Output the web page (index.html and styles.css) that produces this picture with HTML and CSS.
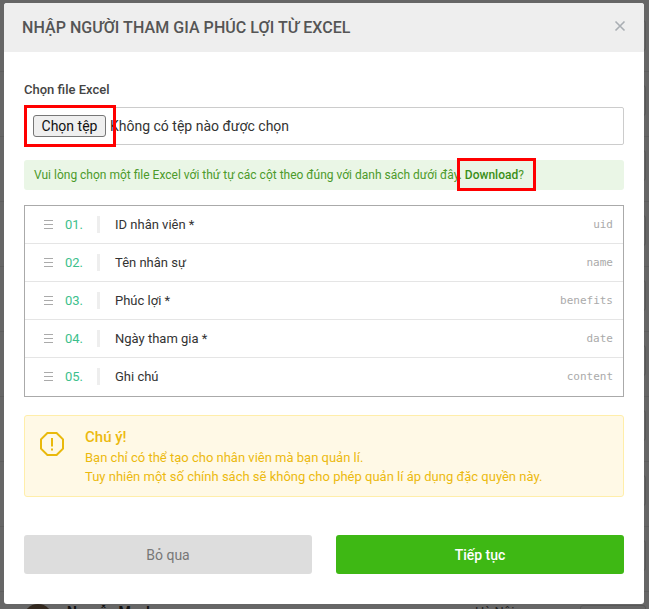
FILE: index.html

```html
<!DOCTYPE html>
<html lang="vi">

<head>
    <meta charset="UTF-8">
    <meta name="viewport" content="width=device-width, initial-scale=1.0">
    <title>Nhập người tham gia phúc lợi từ Excel</title>
    <link rel="stylesheet" href="styles.css">
</head>

<body>
    <!-- page behind the dialog -->
    <div class="page">
        <div class="page-row first"><span class="page-box"></span></div>
        <div class="page-row"><span class="page-box"></span></div>
        <div class="page-row"><span class="page-box"></span></div>
        <div class="page-row"><span class="page-box"></span></div>
        <div class="page-row"><span class="page-box"></span></div>
        <div class="page-row"><span class="page-box"></span></div>
        <div class="page-row"><span class="page-box"></span></div>
        <div class="page-row"><span class="page-box"></span></div>
        <div class="page-row"><span class="page-box"></span></div>
        <div class="page-row last">
            <span class="page-avatar"></span>
            <span class="page-name">Nguyễn Mạnh</span>
            <span class="page-text">Hà Nội</span>
            <span class="page-box"></span>
        </div>
    </div>

    <div class="modal">
        <div class="modal-header">
            <h2>Nhập người tham gia phúc lợi từ Excel</h2>
            <svg class="modal-close" width="12" height="12" viewBox="0 0 12 12">
                <path d="M1.5 1.5l9 9M10.5 1.5l-9 9" stroke="#a9aeb3" stroke-width="1.6" fill="none" />
            </svg>
        </div>

        <div class="modal-body">
            <label class="field-label">Chọn file Excel</label>
            <div class="file-input">
                <button class="file-button">Chọn tệp</button>
                <span>Không có tệp nào được chọn</span>
            </div>

            <div class="alert-success">
                Vui lòng chọn một file Excel với thứ tự các cột theo đúng với danh sách dưới đây. <strong>Download</strong>?
            </div>

            <ul class="column-list">
                <li class="column-row">
                    <span class="drag"></span>
                    <span class="num">01.</span>
                    <span class="name">ID nhân viên *</span>
                    <code class="key">uid</code>
                </li>
                <li class="column-row">
                    <span class="drag"></span>
                    <span class="num">02.</span>
                    <span class="name">Tên nhân sự</span>
                    <code class="key">name</code>
                </li>
                <li class="column-row">
                    <span class="drag"></span>
                    <span class="num">03.</span>
                    <span class="name">Phúc lợi *</span>
                    <code class="key">benefits</code>
                </li>
                <li class="column-row">
                    <span class="drag"></span>
                    <span class="num">04.</span>
                    <span class="name">Ngày tham gia *</span>
                    <code class="key">date</code>
                </li>
                <li class="column-row">
                    <span class="drag"></span>
                    <span class="num">05.</span>
                    <span class="name">Ghi chú</span>
                    <code class="key">content</code>
                </li>
            </ul>

            <div class="alert-warning">
                <svg class="warning-icon" width="24" height="24" viewBox="0 0 24 24">
                    <path d="M7.4 1h9.2L23 7.4v9.2L16.6 23H7.4L1 16.6V7.4z" fill="none" stroke="#e9b90c" stroke-width="2" />
                    <path d="M12 6v8.5M12 16.5v2" fill="none" stroke="#e9b90c" stroke-width="2" />
                </svg>
                <div>
                    <div class="warning-title">Chú ý!</div>
                    <div>Bạn chỉ có thể tạo cho nhân viên mà bạn quản lí.</div>
                    <div>Tuy nhiên một số chính sách sẽ không cho phép quản lí áp dụng đặc quyền này.</div>
                </div>
            </div>

            <div class="modal-actions">
                <button class="btn btn-skip">Bỏ qua</button>
                <button class="btn btn-next">Tiếp tục</button>
            </div>
        </div>

        <!-- red annotation boxes -->
        <span class="mark mark-file"></span>
        <span class="mark mark-download"></span>
    </div>
</body>

</html>
```

FILE: styles.css

```css
html,
body {
    height: 100%;
}

body {
    margin: 0;
    font-family: Roboto, "Liberation Sans", sans-serif;
    background-color: #666;
    color: #333;
    overflow: hidden;
    position: relative;
}

.page {
    height: 609px;
    overflow: hidden;
}

.page-row {
    box-sizing: border-box;
    height: 65px;
    padding: 13px 3px 0 0;
    border-bottom: 1px solid #5e5e5e;
    display: flex;
    align-items: flex-start;
    justify-content: flex-end;
}

.page-row.first {
    height: 72px;
    padding-top: 20px;
}

.page-box {
    box-sizing: border-box;
    width: 66px;
    height: 31px;
    border: 1px solid #585858;
    border-radius: 3px;
}

.page-row.last {
    border-bottom: 0;
    position: relative;
}

.page-avatar {
    position: absolute;
    left: 23px;
    top: 12px;
    width: 30px;
    height: 30px;
    border-radius: 50%;
    background: #33291f;
}

.page-name {
    position: absolute;
    left: 67px;
    top: 12px;
    font-size: 14px;
    font-weight: 700;
    color: #111;
}

.page-text {
    position: absolute;
    left: 475px;
    top: 12px;
    font-size: 13px;
    color: #222;
}

.modal {
    position: absolute;
    left: 4px;
    top: 3px;
    width: 640px;
    height: 601px;
    background: #fff;
    border-radius: 3px;
}

.modal-header {
    height: 49px;
    background: #eee;
    border-radius: 3px 3px 0 0;
    display: flex;
    align-items: center;
    justify-content: space-between;
    padding: 0 18px;
}

.modal-header h2 {
    margin: 0;
    font-size: 16px;
    font-weight: 500;
    letter-spacing: 0.06px;
    color: #555;
    text-transform: uppercase;
}

.modal-close {
    margin-top: -3px;
}

.modal-body {
    padding: 30px 20px 0;
}

.field-label {
    display: block;
    font-size: 13px;
    font-weight: 500;
    line-height: 16px;
    margin-bottom: 9px;
    color: #444;
}

.file-input {
    height: 36px;
    border: 1px solid #ccc;
    border-radius: 2px;
    display: flex;
    align-items: center;
    padding-left: 8px;
    font-size: 14px;
    color: #333;
}

.file-button {
    width: 73px;
    height: 22px;
    padding: 0;
    margin-right: 4px;
    font-family: inherit;
    font-size: 14px;
    color: #111;
    background: #efefef;
    border: 1px solid #767676;
    border-radius: 3px;
}

.alert-success {
    height: 30px;
    line-height: 30px;
    margin-top: 15px;
    padding-left: 10px;
    background: #eaf6e6;
    border-radius: 3px;
    font-size: 12px;
    color: #4c9a2a;
    white-space: nowrap;
}

.alert-success strong {
    font-weight: 500;
    color: #3a8f18;
}

.column-list {
    list-style: none;
    margin: 15px 0 0;
    padding: 0;
    border: 1px solid #aaa;
}

.column-row {
    height: 37px;
    border-bottom: 1px solid #e5e5e5;
    display: flex;
    align-items: center;
    font-size: 13px;
}

.column-row:last-child {
    height: 37px;
    padding-bottom: 1px;
    border-bottom: 0;
}

.drag {
    width: 9px;
    height: 7px;
    margin-left: 19px;
    border-top: 1px solid #aaa;
    border-bottom: 1px solid #aaa;
    position: relative;
}

.drag::after {
    content: "";
    position: absolute;
    left: 0;
    right: 0;
    top: 3px;
    height: 1px;
    background: #aaa;
}

.num {
    width: 32px;
    margin-left: 12px;
    color: #3cbf8c;
    border-right: 3px solid #eee;
    line-height: 17px;
}

.name {
    margin-left: 15px;
    flex: 1;
}

.key {
    margin-right: 10px;
    font-family: "DejaVu Sans Mono", monospace;
    font-size: 11px;
    color: #aaa;
}

.alert-warning {
    height: 80px;
    margin-top: 18px;
    background: #fff9e6;
    border: 1px solid #ffeeaa;
    border-radius: 3px;
    display: flex;
    font-size: 13px;
    line-height: 19px;
    color: #ecb90f;
}

.warning-icon {
    margin: 16px 21px 0 15px;
    flex: none;
}

.warning-title {
    margin-top: 11px;
    font-size: 15px;
    font-weight: 500;
    line-height: 21px;
}

.modal-actions {
    display: flex;
    gap: 24px;
    margin-top: 38px;
}

.btn {
    flex: 1;
    height: 39px;
    border: 0;
    border-radius: 3px;
    font-family: inherit;
    font-size: 14px;
}

.btn-skip {
    background: #ddd;
    color: #777;
}

.btn-next {
    background: #3eb814;
    color: #fff;
    font-weight: 500;
}

.mark {
    position: absolute;
    border: 3px solid #f00;
    box-sizing: border-box;
}

.mark-file {
    left: 20px;
    top: 102px;
    width: 92px;
    height: 42px;
}

.mark-download {
    left: 453px;
    top: 155px;
    width: 79px;
    height: 33px;
}
```
